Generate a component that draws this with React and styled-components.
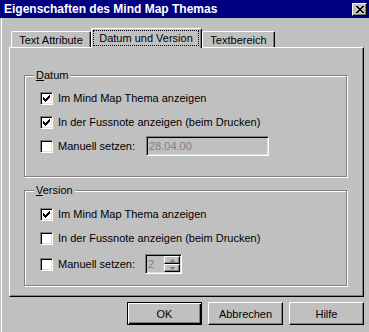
import styled, { createGlobalStyle } from "styled-components";

const GlobalStyle = createGlobalStyle`
  html, body {
    margin: 0;
    padding: 0;
    background: #c0c0c0;
  }
  body {
    font-family: "Liberation Sans", Arial, sans-serif;
    font-size: 11px;
    color: #000;
  }
`;

const Window = styled.div`
  width: 369px;
  height: 332px;
  background: #c0c0c0;
  display: flex;
  flex-direction: column;
  overflow: hidden;
`;

const TitleBar = styled.div`
  height: 18px;
  flex: none;
  background: #000080;
  color: #fff;
  font-weight: bold;
  font-size: 12px;
  display: flex;
  align-items: center;
  justify-content: space-between;
  padding-left: 4px;
  padding-right: 2px;
`;

const CloseBtn = styled.div`
  width: 13px;
  height: 11px;
  background: #c0c0c0;
  border-top: 1px solid #fff;
  border-left: 1px solid #fff;
  border-right: 1px solid #000;
  border-bottom: 1px solid #000;
  box-shadow: inset -1px -1px 0 #808080;
  display: flex;
  align-items: center;
  justify-content: center;
`;

const Body = styled.div`
  flex: 1;
  padding: 10px 5px 0 9px;
  box-shadow: inset 1px 0 0 #c0c0c0, inset 2px 0 0 #fff;
  display: flex;
  flex-direction: column;
`;

const TabRow = styled.div`
  height: 19px;
  display: flex;
  align-items: flex-end;
  padding-left: 2px;
`;

const Tab = styled.div`
  width: ${(p) => p.$w}px;
  height: ${(p) => (p.$active ? 20 : 16)}px;
  margin-bottom: ${(p) => (p.$active ? -1 : 0)}px;
  position: relative;
  z-index: ${(p) => (p.$active ? 1 : 0)};
  box-sizing: border-box;
  background: #c0c0c0;
  border-top: 1px solid #fff;
  border-left: 1px solid #fff;
  border-right: 1px solid #000;
  border-radius: 2px 2px 0 0;
  box-shadow: inset -1px 0 0 #808080;
  display: flex;
  padding: ${(p) => (p.$active ? "1px 2px 2px 1px" : "0")};
`;

const TabLabel = styled.div`
  flex: 1;
  display: flex;
  align-items: center;
  justify-content: center;
  border: 1px ${(p) => (p.$focus ? "dotted #000" : "solid transparent")};
`;

const Panel = styled.div`
  height: 250px;
  box-sizing: border-box;
  border-top: 1px solid #fff;
  border-left: 1px solid #fff;
  border-right: 1px solid #000;
  border-bottom: 1px solid #000;
  box-shadow: inset -1px -1px 0 #808080;
  padding: 27px 16px 0 14px;
  display: flex;
  flex-direction: column;
  gap: 13px;
`;

const Group = styled.div`
  position: relative;
  height: ${(p) => p.$h}px;
  box-sizing: border-box;
  border: 1px solid #808080;
  box-shadow: inset 1px 1px 0 #fff, 1px 1px 0 #fff;
  padding: 10px 0 0 15px;
  display: flex;
  flex-direction: column;
`;

const Legend = styled.div`
  position: absolute;
  top: -7px;
  left: 9px;
  padding: 0 2px;
  background: #c0c0c0;
  line-height: 13px;
`;

const Row = styled.div`
  height: 24px;
  margin-top: ${(p) => p.$mt || 0}px;
  display: flex;
  align-items: center;
`;

const Box = styled.div`
  width: 13px;
  height: 13px;
  box-sizing: border-box;
  flex: none;
  background: #fff;
  border-style: solid;
  border-width: 1px;
  border-color: #808080 #fff #fff #808080;
  box-shadow: inset 1px 1px 0 #000, inset -1px -1px 0 #dfdfdf;
  display: flex;
  align-items: center;
  justify-content: center;
  margin-right: 5px;
`;

const LabelText = styled.span`
  width: ${(p) => (p.$w ? `${p.$w}px` : "auto")};
  white-space: nowrap;
`;

const Field = styled.div`
  width: ${(p) => p.$w}px;
  height: 20px;
  box-sizing: border-box;
  border-style: solid;
  border-width: 1px;
  border-color: #808080 #fff #fff #808080;
  box-shadow: inset 1px 1px 0 #000, inset -1px -1px 0 #dfdfdf;
  background: #c0c0c0;
  color: #808080;
  display: flex;
  align-items: center;
  padding-left: 2px;
  padding-right: 1px;
`;

const FieldText = styled.span`
  flex: 1;
`;

const SpinCol = styled.div`
  width: 16px;
  height: 16px;
  display: flex;
  flex-direction: column;
`;

const SpinBtn = styled.div`
  flex: 1;
  box-sizing: border-box;
  border-top: 1px solid #fff;
  border-left: 1px solid #fff;
  border-right: 1px solid #000;
  border-bottom: 1px solid #000;
  box-shadow: inset -1px -1px 0 #808080;
  display: flex;
  align-items: center;
  justify-content: center;
`;

const ButtonRow = styled.div`
  display: flex;
  justify-content: flex-end;
  gap: 6px;
  margin-top: 5px;
`;

const Button = styled.div`
  width: 75px;
  height: 23px;
  box-sizing: border-box;
  display: flex;
  align-items: center;
  justify-content: center;
  background: #c0c0c0;
  border: 1px solid #000;
  border-top-color: ${(p) => (p.$default ? "#000" : "#fff")};
  border-left-color: ${(p) => (p.$default ? "#000" : "#fff")};
  box-shadow: ${(p) =>
    p.$default
      ? "inset 1px 1px 0 #fff, inset -1px -1px 0 #000, inset -2px -2px 0 #808080"
      : "inset -1px -1px 0 #808080"};
`;

const Check = () => (
  <svg width="7" height="7" viewBox="0 0 7 7" shapeRendering="crispEdges">
    <path
      fill="#000"
      d="M0 2h1v3H0zM1 3h1v3H1zM2 4h1v3H2zM3 3h1v3H3zM4 2h1v3H4zM5 1h1v3H5zM6 0h1v3H6z"
    />
  </svg>
);

const CloseX = () => (
  <svg width="8" height="7" viewBox="0 0 8 7" shapeRendering="crispEdges">
    <path
      fill="#000"
      d="M0 0h2v1H0zM6 0h2v1H6zM1 1h2v1H1zM5 1h2v1H5zM2 2h4v1H2zM3 3h2v1H3zM2 4h4v1H2zM1 5h2v1H1zM5 5h2v1H5zM0 6h2v1H0zM6 6h2v1H6z"
    />
  </svg>
);

const Arrow = ({ up }) => (
  <svg width="5" height="3" viewBox="0 0 5 3" shapeRendering="crispEdges">
    <path
      fill="#808080"
      d={up ? "M2 0h1v1H2zM1 1h3v1H1zM0 2h5v1H0z" : "M0 0h5v1H0zM1 1h3v1H1zM2 2h1v1H2z"}
    />
  </svg>
);

function CheckRow({ checked, children, mt }) {
  return (
    <Row $mt={mt}>
      <Box>{checked && <Check />}</Box>
      {children}
    </Row>
  );
}

export default function App() {
  return (
    <>
      <GlobalStyle />
      <Window>
        <TitleBar>
          <span>Eigenschaften des Mind Map Themas</span>
          <CloseBtn>
            <CloseX />
          </CloseBtn>
        </TitleBar>
        <Body>
          <TabRow>
            <Tab $w={80}>
              <TabLabel>Text Attribute</TabLabel>
            </Tab>
            <Tab $w={111} $active>
              <TabLabel $focus>Datum und Version</TabLabel>
            </Tab>
            <Tab $w={73}>
              <TabLabel>Textbereich</TabLabel>
            </Tab>
          </TabRow>
          <Panel>
            <Group $h={102}>
              <Legend>
                <u>D</u>atum
              </Legend>
              <CheckRow checked>
                <LabelText>Im Mind Map Thema anzeigen</LabelText>
              </CheckRow>
              <CheckRow checked>
                <LabelText>In der Fussnote anzeigen (beim Drucken)</LabelText>
              </CheckRow>
              <CheckRow>
                <LabelText $w={88}>Manuell setzen:</LabelText>
                <Field $w={123}>
                  <FieldText>28.04.00</FieldText>
                </Field>
              </CheckRow>
            </Group>
            <Group $h={96}>
              <Legend>
                <u>V</u>ersion
              </Legend>
              <CheckRow checked mt={1}>
                <LabelText>Im Mind Map Thema anzeigen</LabelText>
              </CheckRow>
              <CheckRow>
                <LabelText>In der Fussnote anzeigen (beim Drucken)</LabelText>
              </CheckRow>
              <CheckRow mt={2}>
                <LabelText $w={87}>Manuell setzen:</LabelText>
                <Field $w={37}>
                  <FieldText>2</FieldText>
                  <SpinCol>
                    <SpinBtn>
                      <Arrow up />
                    </SpinBtn>
                    <SpinBtn>
                      <Arrow />
                    </SpinBtn>
                  </SpinCol>
                </Field>
              </CheckRow>
            </Group>
          </Panel>
          <ButtonRow>
            <Button $default>OK</Button>
            <Button>Abbrechen</Button>
            <Button>Hilfe</Button>
          </ButtonRow>
        </Body>
      </Window>
    </>
  );
}
